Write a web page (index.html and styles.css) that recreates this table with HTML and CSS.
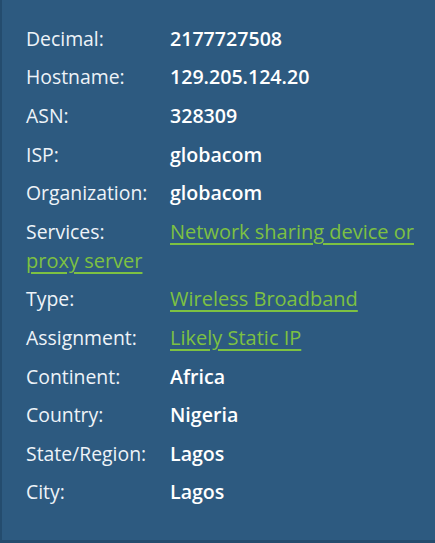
FILE: index.html
```html
<!DOCTYPE html>
<html>
<head>
<meta charset="utf-8">
<link rel="stylesheet" href="styles.css">
</head>
<body>
<div class="panel">
  <div class="row"><span class="label">Decimal:</span><span class="value">2177727508</span></div>
  <div class="row"><span class="label">Hostname:</span><span class="value">129.205.124.20</span></div>
  <div class="row"><span class="label">ASN:</span><span class="value">328309</span></div>
  <div class="row"><span class="label">ISP:</span><span class="value">globacom</span></div>
  <div class="row"><span class="label">Organization:</span><span class="value">globacom</span></div>
  <div class="row"><span class="label">Services:</span><a class="link" href="#">Network sharing device or proxy server</a></div>
  <div class="row"><span class="label">Type:</span><a class="link" href="#">Wireless Broadband</a></div>
  <div class="row"><span class="label">Assignment:</span><a class="link" href="#">Likely Static IP</a></div>
  <div class="row"><span class="label">Continent:</span><span class="value">Africa</span></div>
  <div class="row"><span class="label">Country:</span><span class="value">Nigeria</span></div>
  <div class="row"><span class="label">State/Region:</span><span class="value">Lagos</span></div>
  <div class="row"><span class="label">City:</span><span class="value">Lagos</span></div>
</div>
</body>
</html>
```
FILE: styles.css
```css
html, body {
  margin: 0;
  padding: 0;
  background: #2d5a80;
}
.panel {
  box-sizing: border-box;
  width: 435px;
  height: 543px;
  background: #2d5a80;
  border-left: 2px solid #244c6e;
  border-bottom: 3px solid #244c6e;
  padding: 19px 10px 0 24px;
  font-family: "Open Sans", sans-serif;
  font-size: 20px;
  color: #eef3f8;
}
.row {
  padding: 4.8px 0;
  line-height: 29px;
}
.label {
  display: inline-block;
  width: 144px;
  font-size: 19.4px;
  font-weight: 400;
}
.value {
  font-weight: 600;
  font-size: 19.6px;
  color: #ffffff;
}
.link {
  color: #7dc142;
  text-decoration: underline;
  text-decoration-thickness: 2px;
  text-underline-offset: 4px;
}
```
